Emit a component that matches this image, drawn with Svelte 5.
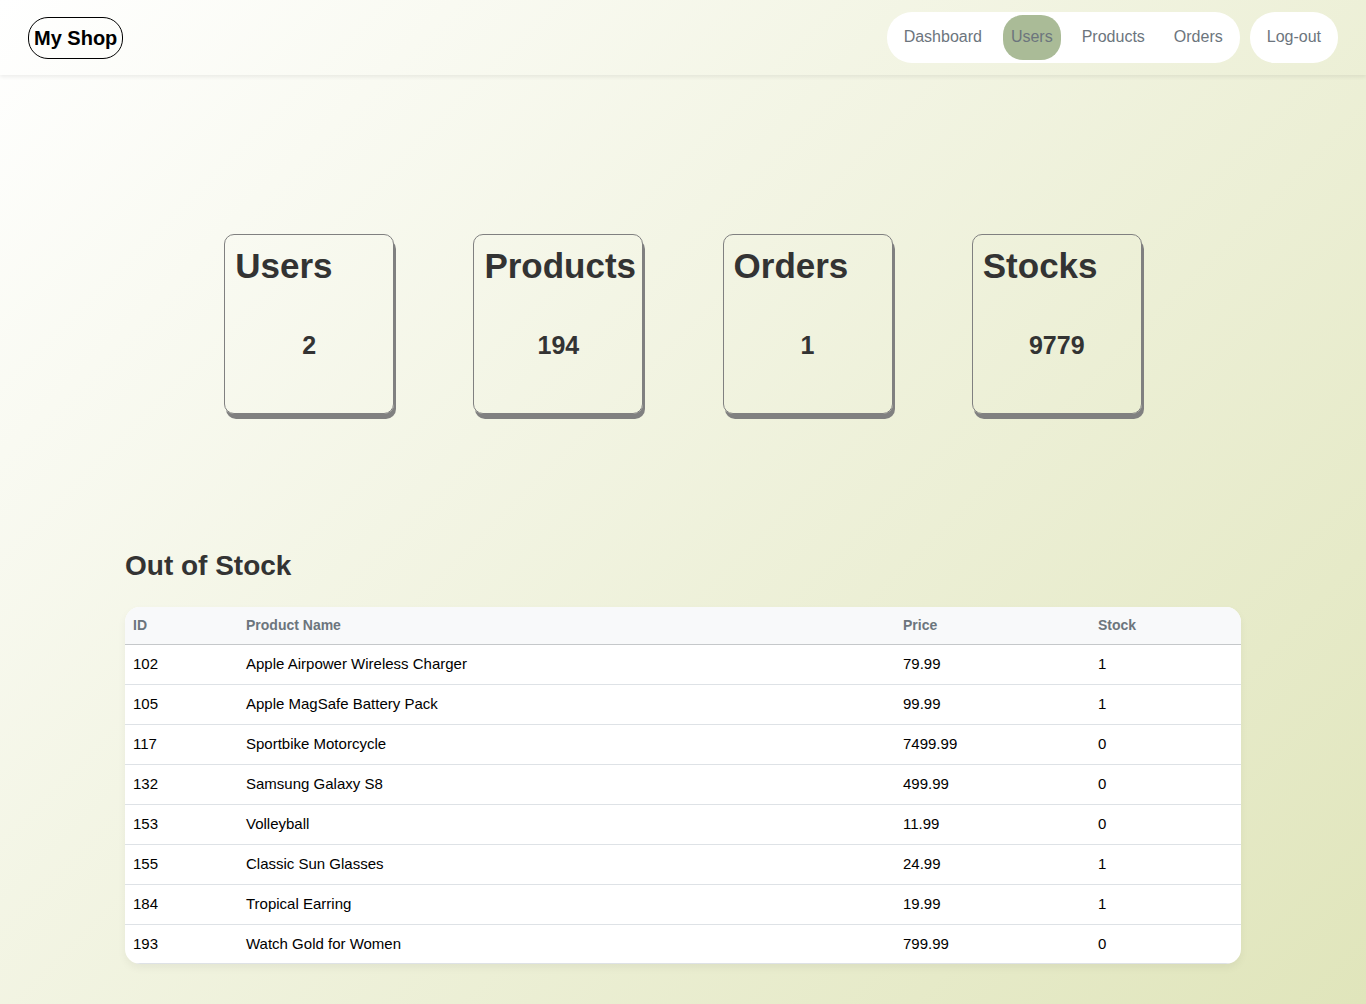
<script>
  const links = ['Dashboard', 'Users', 'Products', 'Orders'];
  const stats = [
    { title: 'Users', value: 2 },
    { title: 'Products', value: 194 },
    { title: 'Orders', value: 1 },
    { title: 'Stocks', value: 9779 },
  ];
  const rows = [
    [102, 'Apple Airpower Wireless Charger', '79.99', 1],
    [105, 'Apple MagSafe Battery Pack', '99.99', 1],
    [117, 'Sportbike Motorcycle', '7499.99', 0],
    [132, 'Samsung Galaxy S8', '499.99', 0],
    [153, 'Volleyball', '11.99', 0],
    [155, 'Classic Sun Glasses', '24.99', 1],
    [184, 'Tropical Earring', '19.99', 1],
    [193, 'Watch Gold for Women', '799.99', 0],
  ];
</script>

<div class="page">
  <header>
    <a class="brand" href="#home">My Shop</a>
    <nav>
      <div class="pill">
        {#each links as link}
          <a href="#{link}" class:active={link === 'Users'}>{link}</a>
        {/each}
      </div>
      <div class="pill"><a href="#logout">Log-out</a></div>
    </nav>
  </header>

  <main>
    <section class="stats">
      {#each stats as stat}
        <article>
          <h1>{stat.title}</h1>
          <p>{stat.value}</p>
        </article>
      {/each}
    </section>

    <section class="stock">
      <h2>Out of Stock</h2>
      <table>
        <thead>
          <tr><th class="id">ID</th><th>Product Name</th><th class="price">Price</th><th class="qty">Stock</th></tr>
        </thead>
        <tbody>
          {#each rows as row}
            <tr>{#each row as cell}<td>{cell}</td>{/each}</tr>
          {/each}
        </tbody>
      </table>
    </section>
  </main>
</div>

<style>
  :global(body) {
    margin: 0;
    font-family: "Liberation Sans", Arial, sans-serif;
  }
  .page {
    box-sizing: border-box;
    min-height: 100vh;
    padding-bottom: 40px;
    background: linear-gradient(135deg, #ffffff 0%, #e0e5bb 100%);
    color: #333;
  }
  header {
    display: flex;
    align-items: center;
    justify-content: space-between;
    padding: 12px 28px;
    box-shadow: 0 2px 4px rgba(0, 0, 0, 0.07);
  }
  a {
    text-decoration: none;
  }
  .brand {
    padding: 9px 5px;
    border: 1px solid #000;
    border-radius: 20px;
    color: #000;
    font-size: 20px;
    line-height: 22px;
    font-weight: bold;
  }
  nav {
    display: flex;
    gap: 10px;
  }
  .pill {
    display: flex;
    gap: 13px;
    padding: 3px 9px;
    border-radius: 25px;
    background: #fff;
  }
  .pill a {
    padding: 13px 8px 14px;
    border-radius: 20px;
    color: #6c757d;
    font-size: 16px;
    line-height: 18px;
  }
  .pill .active {
    background: #aabb97;
  }
  .stats {
    display: flex;
    justify-content: space-evenly;
    padding: 159px 145px 134px;
  }
  article {
    box-sizing: border-box;
    width: 170px;
    height: 180px;
    padding: 10px;
    border: 1px solid gray;
    border-radius: 10px;
    box-shadow: 2px 5px gray;
  }
  h1 {
    margin: 0;
    font-size: 35px;
    line-height: 42px;
  }
  article p {
    margin: 42px 0 0;
    text-align: center;
    font-size: 25px;
    line-height: 32px;
    font-weight: bold;
  }
  .stock {
    padding: 0 125px;
  }
  h2 {
    margin: 0 0 24px;
    font-size: 28px;
    line-height: 35px;
  }
  table {
    width: 100%;
    table-layout: fixed;
    border-spacing: 0;
    border-radius: 15px;
    overflow: hidden;
    background: #fff;
    box-shadow: 0 4px 8px rgba(0, 0, 0, 0.05);
    color: #000;
    font-size: 15px;
  }
  th, td {
    padding: 0 8px 2px;
    text-align: left;
  }
  th {
    height: 35px;
    border-bottom: 1px solid #c5c8ca;
    background: #f8f9fa;
    color: #6c757d;
    font-size: 14px;
  }
  td {
    height: 37px;
    border-bottom: 1px solid #dee2e6;
  }
  tr:last-child td {
    height: 36px;
  }
  .id { width: 97px; }
  .price { width: 179px; }
  .qty { width: 135px; }
</style>
